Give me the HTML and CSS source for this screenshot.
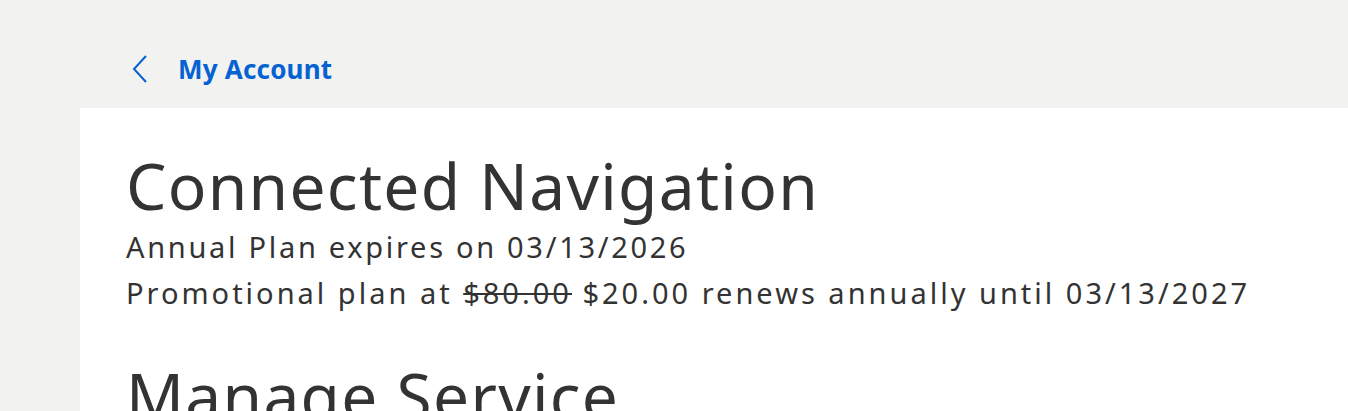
FILE: index.html
```html
<!DOCTYPE html>
<html>
<head>
<meta charset="utf-8">
<link rel="stylesheet" href="styles.css">
</head>
<body>
<div class="page">
  <nav class="crumb">
    <a class="back" href="#">
      <svg class="chev" width="18" height="30" viewBox="0 0 18 30"><path d="M16 2 L4 15 L16 28" fill="none" stroke="#0562d2" stroke-width="2"/></svg>
      <span class="back-label">My Account</span>
    </a>
  </nav>
  <main class="panel">
    <h1 class="title">Connected Navigation</h1>
    <p class="meta">Annual Plan expires on 03/13/2026</p>
    <p class="meta meta-wide">Promotional plan at <s class="old">$80.00</s> $20.00 renews annually until 03/13/2027</p>
    <h2 class="title section">Manage Service</h2>
  </main>
</div>
</body>
</html>
```
FILE: styles.css
```css
html, body {
  margin: 0;
  padding: 0;
  background: #f2f2f1;
  height: 100%;
  overflow: hidden;
}
.page {
  padding-left: 80px;
  font-family: "Noto Sans", "Open Sans", sans-serif;
  color: #333333;
}
.crumb {
  height: 108px;
  display: flex;
  align-items: flex-end;
  margin-left: -80px;
  padding-left: 130px;
  padding-bottom: 21px;
  box-sizing: border-box;
}
.back {
  display: flex;
  align-items: center;
  gap: 30px;
  text-decoration: none;
  color: #0562d2;
}
.back-label {
  font-size: 26px;
  font-weight: 700;
  letter-spacing: 0.2px;
}
.panel {
  background: #ffffff;
  padding: 40px 46px 0;
  min-height: 400px;
}
.title {
  margin: 0;
  font-size: 64px;
  font-weight: 400;
  letter-spacing: 1.3px;
  line-height: 76px;
}
.meta {
  margin: 0;
  font-size: 29px;
  line-height: 46px;
  letter-spacing: 2.7px;
}
.meta-wide {
  letter-spacing: 3px;
}
.old {
  text-decoration-thickness: 2px;
}
.section {
  margin-top: 42px;
}
```
